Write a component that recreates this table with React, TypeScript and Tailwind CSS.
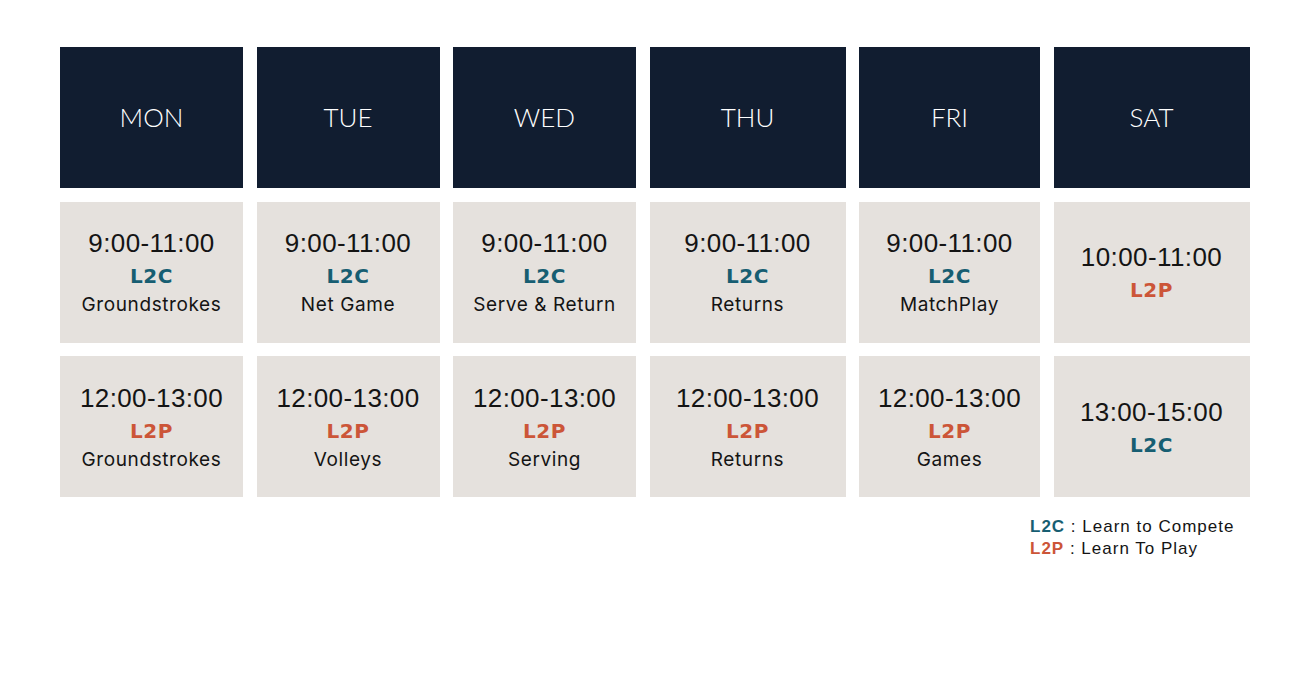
import React from "react";

type Cell = { time: string; code: "L2C" | "L2P"; desc?: string };

const days = ["MON", "TUE", "WED", "THU", "FRI", "SAT"];

const rows: Cell[][] = [
  [
    { time: "9:00-11:00", code: "L2C", desc: "Groundstrokes" },
    { time: "9:00-11:00", code: "L2C", desc: "Net Game" },
    { time: "9:00-11:00", code: "L2C", desc: "Serve & Return" },
    { time: "9:00-11:00", code: "L2C", desc: "Returns" },
    { time: "9:00-11:00", code: "L2C", desc: "MatchPlay" },
    { time: "10:00-11:00", code: "L2P" },
  ],
  [
    { time: "12:00-13:00", code: "L2P", desc: "Groundstrokes" },
    { time: "12:00-13:00", code: "L2P", desc: "Volleys" },
    { time: "12:00-13:00", code: "L2P", desc: "Serving" },
    { time: "12:00-13:00", code: "L2P", desc: "Returns" },
    { time: "12:00-13:00", code: "L2P", desc: "Games" },
    { time: "13:00-15:00", code: "L2C" },
  ],
];

function CellBox({ c }: { c: Cell }) {
  return (
    <div className="h-[141px] bg-[#e5e1dd] flex flex-col items-center justify-center text-[#141414]">
      <div className="text-[26px] leading-[36px] tracking-[0.4px] font-['Liberation_Sans',sans-serif]">
        {c.time}
      </div>
      <div
        className={
          c.code === "L2C"
            ? "text-[20px] leading-[30px] font-bold tracking-[0.5px] font-['DejaVu_Sans',sans-serif] text-[#175e72]"
            : "text-[20px] leading-[30px] font-bold tracking-[0.5px] font-['DejaVu_Sans',sans-serif] text-[#cc5538]"
        }
      >
        {c.code}
      </div>
      {c.desc && (
        <div className="text-[19px] leading-[28px] tracking-[0.6px] font-['Inter',sans-serif]">
          {c.desc}
        </div>
      )}
    </div>
  );
}

export default function App() {
  return (
    <div className="w-[1300px] h-[700px] bg-white pt-[47px] pl-[60px]">
      <div className="grid grid-cols-[183px_183px_183px_196px_181px_196px] gap-x-[13.5px] gap-y-[13.5px]">
        {days.map((d) => (
          <div
            key={d}
            className="h-[141px] bg-[#111d30] flex items-center justify-center text-white text-[26px] font-light font-['Lato',sans-serif]"
          >
            {d}
          </div>
        ))}
        {rows.map((r, i) =>
          r.map((c, j) => <CellBox key={i + "-" + j} c={c} />)
        )}
      </div>
      <div className="ml-[970px] mt-[19px] text-[17px] leading-[22px] tracking-[1px] text-[#141414] font-['Liberation_Sans',sans-serif]">
        <div>
          <span className="font-bold text-[#175e72]">L2C</span> : Learn to Compete
        </div>
        <div>
          <span className="font-bold text-[#cc5538]">L2P</span> : Learn To Play
        </div>
      </div>
    </div>
  );
}
